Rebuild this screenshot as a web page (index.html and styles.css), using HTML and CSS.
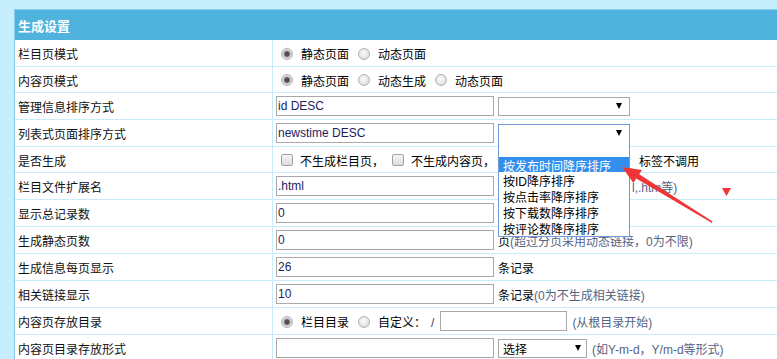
FILE: index.html
```html
<!DOCTYPE html>
<html lang="zh-CN">
<head>
<meta charset="utf-8">
<title>生成设置</title>
<link rel="stylesheet" href="styles.css">
</head>
<body>
<div class="panel">
  <div class="hd">生成设置</div>

  <div class="row h26">
    <div class="lab">栏目页模式</div>
    <div class="fld">
      <input type="radio" class="rd" name="lm" checked><span class="opt">静态页面</span>
      <input type="radio" class="rd" name="lm"><span class="opt">动态页面</span>
    </div>
  </div>

  <div class="row h25">
    <div class="lab">内容页模式</div>
    <div class="fld">
      <input type="radio" class="rd" name="nr" checked><span class="opt">静态页面</span>
      <input type="radio" class="rd" name="nr"><span class="opt">动态生成</span>
      <input type="radio" class="rd" name="nr"><span class="opt">动态页面</span>
    </div>
  </div>

  <div class="row">
    <div class="lab">管理信息排序方式</div>
    <div class="fld">
      <input type="text" class="txt" value="id DESC">
      <span class="sel"><span class="sv"></span><span class="arr"></span></span>
    </div>
  </div>

  <div class="row">
    <div class="lab">列表式页面排序方式</div>
    <div class="fld">
      <input type="text" class="txt" value="newstime DESC">
      <span class="sel focus"><span class="sv"></span><span class="arr"></span>
        <span class="list">
          <span class="it first"></span>
          <span class="it hl">按发布时间降序排序</span>
          <span class="it">按ID降序排序</span>
          <span class="it">按点击率降序排序</span>
          <span class="it">按下载数降序排序</span>
          <span class="it">按评论数降序排序</span>
        </span>
      </span>
    </div>
  </div>

  <div class="row h25">
    <div class="lab">是否生成</div>
    <div class="fld">
      <input type="checkbox" class="cb"><span class="opt c">不生成栏目页，</span>
      <input type="checkbox" class="cb"><span class="opt c">不生成内容页，</span>
      <span class="hid"><input type="checkbox" class="cb"></span>
      <span class="opt">标签不调用</span>
    </div>
  </div>

  <div class="row">
    <div class="lab">栏目文件扩展名</div>
    <div class="fld">
      <input type="text" class="txt" value=".html">
      <span class="clip"><span class="hint">l,.htm等)</span></span>
    </div>
  </div>

  <div class="row">
    <div class="lab">显示总记录数</div>
    <div class="fld">
      <input type="text" class="txt" value="0">
    </div>
  </div>

  <div class="row">
    <div class="lab">生成静态页数</div>
    <div class="fld">
      <input type="text" class="txt" value="0">
      <span class="unit">页</span><span class="hint">(超过分页采用动态链接，0为不限)</span>
    </div>
  </div>

  <div class="row">
    <div class="lab">生成信息每页显示</div>
    <div class="fld">
      <input type="text" class="txt" value="26">
      <span class="unit">条记录</span>
    </div>
  </div>

  <div class="row">
    <div class="lab">相关链接显示</div>
    <div class="fld">
      <input type="text" class="txt" value="10">
      <span class="unit">条记录</span><span class="hint">(0为不生成相关链接)</span>
    </div>
  </div>

  <div class="row">
    <div class="lab">内容页存放目录</div>
    <div class="fld">
      <input type="radio" class="rd" name="ml" checked><span class="opt">栏目目录</span>
      <input type="radio" class="rd" name="ml"><span class="opt">自定义：</span>
      <span class="slash">/</span>
      <input type="text" class="txt short" value="">
      <span class="hint gap">(从根目录开始)</span>
    </div>
  </div>

  <div class="row">
    <div class="lab">内容页目录存放形式</div>
    <div class="fld">
      <input type="text" class="txt" value="">
      <span class="sel small"><span class="sv">选择</span><span class="arr"></span></span>
      <span class="hint gap">(如Y-m-d，Y/m-d等形式)</span>
    </div>
  </div>
</div>

<svg class="anno" width="777" height="359" viewBox="0 0 777 359">
  <polygon points="622,167 642,170 639.2,174.2 712.6,221.4 711.6,222.8 636.2,178.6 633.4,183" fill="#ef3535"/>
  <polygon points="722,188 731,188 726.5,196" fill="#ef3535"/>
</svg>
</body>
</html>
```
FILE: styles.css
```css
html, body {
  margin: 0;
  padding: 0;
}
body {
  background: #c7eefc;
  overflow: hidden;
  width: 777px;
  height: 359px;
  position: relative;
  font-family: "Liberation Sans", "Noto Sans CJK SC", sans-serif;
  font-size: 12px;
  color: #111;
}
.panel {
  margin: 9px 0 0 14px;
  width: 800px;
  border: 1px solid #86cdec;
  border-right: none;
  background: #fff;
}
.hd {
  height: 27px;
  padding-top: 3px;
  line-height: 27px;
  background: #4fb3dd;
  color: #fff;
  font-weight: bold;
  font-size: 13px;
  padding-left: 3px;
}
.row {
  display: flex;
  height: 26px;
  border-bottom: 1px solid #c9ecfb;
}
.row.h26 { height: 26px; }
.row.h25 { height: 25px; }
.lab {
  width: 258px;
  flex: none;
  box-sizing: border-box;
  padding: 4px 0 0 3px;
  border-right: 1px solid #c9ecfb;
  display: flex;
  align-items: center;
  line-height: 14px;
  white-space: nowrap;
}
.fld {
  flex: 1;
  display: flex;
  align-items: center;
  padding-left: 3px;
  white-space: nowrap;
  line-height: 14px;
}
.rd {
  -webkit-appearance: none;
  appearance: none;
  flex: none;
  width: 12px;
  height: 12px;
  margin: 1px 8px 0 5px;
  box-sizing: border-box;
  border-radius: 50%;
  border: 1px solid #b3b3b3;
  background: radial-gradient(circle at 45% 40%, #fbfbfb 0, #e6e6e6 55%, #cfcfcf 100%);
}
.rd:checked {
  background: radial-gradient(circle at 50% 50%, #474747 0, #555 2px, #959595 3px, #e0e0e0 4px, #d0d0d0 100%);
}
.cb {
  -webkit-appearance: none;
  appearance: none;
  flex: none;
  width: 12px;
  height: 12px;
  margin: 1px 7px 0 5px;
  box-sizing: border-box;
  border: 1px solid #a2a2a2;
  border-radius: 2px;
  background: linear-gradient(#f6f6f6, #dcdcdc);
}
.opt, .unit, .hint, .slash { padding-top: 4px; }
.opt { margin-right: 4px; color: #000; }
.opt.c { margin-right: 3px; }
.hid {
  display: inline-flex;
  align-items: center;
  width: 141px;
  padding-left: 6px;
  box-sizing: border-box;
}
.txt {
  flex: none;
  width: 218px;
  height: 20px;
  margin: 0;
  box-sizing: border-box;
  border: 1px solid #a9a9a9;
  padding: 0 1px;
  font-family: "Liberation Sans", "Noto Sans CJK SC", sans-serif;
  font-size: 12px;
  color: #1d1d5e;
  background: #fff;
  outline: none;
}
.txt.short { width: 127px; margin-left: 6px; }
.sel {
  position: relative;
  flex: none;
  display: inline-flex;
  align-items: center;
  justify-content: space-between;
  width: 132px;
  height: 19px;
  margin-left: 4px;
  box-sizing: border-box;
  border: 1px solid #a9a9a9;
  padding: 0 7px 0 4px;
  background: #fff;
  color: #000;
}
.sel .sv { padding-top: 3px; }
.sel.small { width: 89px; padding-right: 5px; }
.sel.focus { border-color: #7199d8; }
.arr {
  width: 0;
  height: 0;
  border-left: 3px solid transparent;
  border-right: 3px solid transparent;
  border-top: 6px solid #000;
}
.list {
  position: absolute;
  top: 100%;
  left: -1px;
  width: 132px;
  box-sizing: border-box;
  border: 1px solid #7199d8;
  border-top: none;
  background: #fff;
  z-index: 5;
  display: flex;
  flex-direction: column;
}
.it {
  display: block;
  height: 13px;
  padding: 3px 0 0 4px;
  line-height: 15px;
  color: #000;
  white-space: nowrap;
}
.it.first { height: 15px; padding-top: 0; }
.it.hl {
  height: 12px;
  line-height: 14px;
  background: #3190ee;
  color: #fff;
}
.clip {
  display: inline-flex;
  margin-left: 138px;
}
.unit { margin-left: 4px; color: #000; }
.hint { color: #56637f; }
.hint.gap { margin-left: 5px; }
.slash { color: #3a3a6a; margin-left: 1px; }
.anno {
  position: absolute;
  left: 0;
  top: 0;
  pointer-events: none;
  z-index: 20;
}
```
